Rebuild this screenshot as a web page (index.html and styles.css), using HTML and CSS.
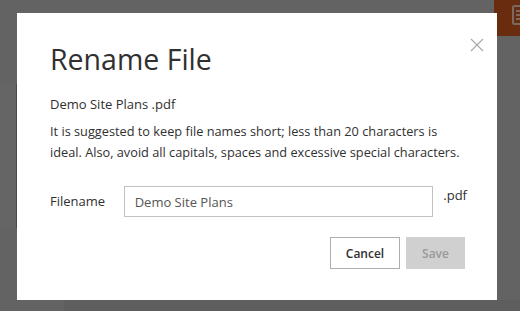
FILE: index.html
```html
<!DOCTYPE html>
<html lang="en">
  <head>
    <meta charset="UTF-8" />
    <title>Rename File</title>
    <link rel="stylesheet" href="styles.css">
  </head>

  <body>
    <div class="backdrop">
      <div class="side-panel"></div>
      <div class="bottom-panel"></div>
      <div class="top-tab">
        <svg width="14" height="20" viewBox="0 0 14 20">
          <rect x="1" y="1" width="12" height="18" rx="1.5" fill="none" stroke="#7a6a60" stroke-width="2"/>
          <line x1="4" y1="6" x2="10" y2="6" stroke="#7a6a60" stroke-width="2"/>
          <line x1="4" y1="10" x2="10" y2="10" stroke="#7a6a60" stroke-width="2"/>
          <line x1="4" y1="14" x2="10" y2="14" stroke="#7a6a60" stroke-width="2"/>
        </svg>
      </div>
    </div>

    <div class="modal">
      <button class="close" aria-label="Close">
        <svg width="14" height="14" viewBox="0 0 14 14">
          <path d="M1 1L13 13M13 1L1 13" stroke="#a9a9a9" stroke-width="1.2" fill="none"/>
        </svg>
      </button>
      <h1 class="modal-title">Rename File</h1>
      <p class="file-name">Demo Site Plans .pdf</p>
      <p class="hint">
        It is suggested to keep file names short; less than 20 characters is<br>
        ideal. Also, avoid all capitals, spaces and excessive special characters.
      </p>
      <div class="field">
        <label class="field-label" for="filename">Filename</label>
        <input class="field-input" id="filename" type="text" value="Demo Site Plans">
        <span class="field-ext">.pdf</span>
      </div>
      <div class="actions">
        <button class="btn btn-cancel">Cancel</button>
        <button class="btn btn-save" disabled>Save</button>
      </div>
    </div>
  </body>
</html>
```

FILE: styles.css
```css
body {
  margin: 0;
  width: 520px;
  height: 311px;
  overflow: hidden;
  font-family: "Open Sans", "Noto Sans", sans-serif;
  background-color: #636363;
  position: relative;
}

.backdrop {
  position: absolute;
  inset: 0;
}

.side-panel {
  position: absolute;
  left: 0;
  top: 84px;
  width: 16px;
  height: 144px;
  background-color: #656565;
  border-right: 1px solid #4a4a4a;
}

.bottom-panel {
  position: absolute;
  left: 64px;
  top: 300px;
  right: 0;
  bottom: 0;
  background-color: #5f5e5f;
}

.top-tab {
  position: absolute;
  left: 494px;
  top: 0;
  width: 26px;
  height: 36px;
  background-color: #6a2c0e;
  display: flex;
  padding: 5px 0 0 18px;
  box-sizing: border-box;
  overflow: hidden;
}

.top-tab svg {
  flex-shrink: 0;
}

.modal {
  position: absolute;
  left: 17px;
  top: 13px;
  width: 480px;
  height: 287px;
  background-color: #fff;
  padding: 27px 30px 0 33px;
  box-sizing: border-box;
  color: #303030;
}

.close {
  position: absolute;
  top: 25px;
  right: 12px;
  border: none;
  background: none;
  padding: 0;
  width: 16px;
  height: 16px;
}

.modal-title {
  margin: 0;
  font-size: 28.5px;
  font-weight: 400;
  line-height: 38px;
  color: #303030;
}

.file-name {
  margin: 17px 0 0;
  font-size: 13px;
  line-height: 18px;
}

.hint {
  margin: 8px 0 0;
  font-size: 12.75px;
  line-height: 21px;
  white-space: nowrap;
}

.field {
  display: flex;
  align-items: flex-start;
  margin-top: 23px;
}

.field-label {
  width: 74px;
  font-size: 13px;
  line-height: 31px;
}

.field-input {
  width: 311px;
  height: 31px;
  box-sizing: border-box;
  border: 1px solid #c2c2c2;
  padding: 0 10px;
  font-family: inherit;
  font-size: 13px;
  color: #555;
}

.field-ext {
  margin-left: 10px;
  font-size: 13px;
  line-height: 18px;
}

.actions {
  display: flex;
  justify-content: flex-end;
  gap: 6px;
  margin-top: 20px;
  width: 415px;
}

.btn {
  height: 32px;
  font-family: inherit;
  font-size: 12px;
  font-weight: 600;
  padding: 0 10px;
  border-radius: 0;
}

.btn-cancel {
  background-color: #fff;
  border: 1px solid #adadad;
  color: #303030;
  width: 70px;
}

.btn-save {
  background-color: #d0d0d0;
  border: 1px solid #d0d0d0;
  color: #9a9a9a;
  width: 59px;
}
```
